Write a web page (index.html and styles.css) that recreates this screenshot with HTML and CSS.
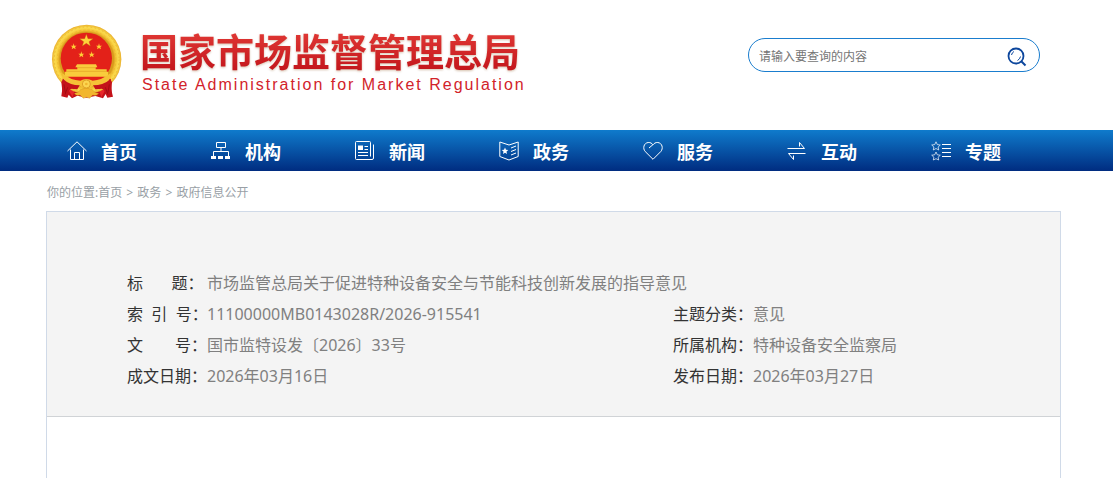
FILE: index.html
```
<!DOCTYPE html>
<html lang="zh-CN">
<head>
    <meta charset="UTF-8">
    <meta name="viewport" content="width=device-width, initial-scale=1.0">
    <title>国家市场监督管理总局</title>
    <link rel="stylesheet" href="styles.css">
</head>
<body>
    <header class="header">
        <a class="logo" href="#">
            <svg class="emblem" viewBox="33 26 216 228" aria-hidden="true">
                <defs>
                    <radialGradient id="gold" cx="50%" cy="50%" r="50%">
                        <stop offset="78%" stop-color="#d99a1c"/>
                        <stop offset="84%" stop-color="#f6c838"/>
                        <stop offset="92%" stop-color="#fbdc4f"/>
                        <stop offset="100%" stop-color="#e9ae2a"/>
                    </radialGradient>
                </defs>
                <path fill="#c4121a" d="M68 188 L212 188 L214 218 Q216 236 219 244 L202 247 L197 236 L189 249 L166 242 L140 247 L112 241 L96 249 L86 238 L82 247 L64 243 Q68 222 66 205 Z"/>
                <path fill="#e8262a" d="M68 190 L90 214 L70 224 Z M213 190 L188 214 L212 224 Z M84 222 L106 216 L98 246 Z M197 222 L174 216 L184 246 Z"/>
                <circle cx="140" cy="132" r="104" fill="url(#gold)"/>
                <circle cx="140" cy="132" r="97" fill="none" stroke="#d9981d" stroke-width="3" stroke-dasharray="5 7" opacity=".4"/>
                <circle cx="140" cy="132" r="88" fill="none" stroke="#e2a826" stroke-width="3" stroke-dasharray="8 5" opacity=".4"/>
                <circle cx="139" cy="129" r="77" fill="#e32119"/>
                <path fill="#ffd43b" stroke="#b8690f" stroke-width="1" d="M139 57 L144 70 L159 70 L147 79 L151 92 L139 84 L127 92 L131 79 L119 70 L134 70 Z"/>
                <g fill="#ffcf36">
                    <path id="star" d="M101 84 L103 91 L110 91 L105 95 L107 102 L101 98 L95 102 L97 95 L92 91 L99 91 Z"/>
                    <use href="#star" x="76"/>
                    <use href="#star" x="23" y="24"/>
                    <use href="#star" x="54" y="24"/>
                </g>
                <path fill="#f9cc3c" d="M111 147 H168 L172 156 H167 V162 H200 V169 H204 V184 H75 V169 H79 V162 H112 V156 H106 Z"/>
                <path stroke="#e2a022" stroke-width="2" d="M112 157 H167 M79 168 H200"/>
                <path fill="#e32119" d="M75 185 H204 L191 197 Q139 216 88 197 Z"/>
                <path fill="#f5c237" d="M68 174 Q92 196 121 196 Q129 191 139 191 Q149 191 158 196 Q184 196 211 174 L213 192 Q190 209 160 211 Q151 218 139 218 Q127 218 119 211 Q88 208 67 192 Z"/>
                <path fill="#c4121a" d="M64 200 L70 190 Q76 211 97 219 Q82 226 78 243 L68 237 Z M216 200 L209 190 Q202 211 183 219 Q198 226 201 243 L213 237 Z"/>
                <path fill="#c4121a" d="M68 190 Q90 210 119 210 L112 222 Q84 222 68 206 Z M213 190 Q190 210 159 210 L166 222 Q196 222 213 206 Z"/>
                <path fill="#f2b62d" stroke="#c67e14" stroke-width="1" d="M103 234 Q119 231 121 223 L139 218 L157 223 Q161 232 176 234 Q171 243 158 239 L149 249 Q139 243 130 249 L120 239 Q108 243 103 234 Z"/>
                <circle cx="139" cy="206" r="12" fill="#fbd550" stroke="#d18b18" stroke-width="2"/>
                <circle cx="139" cy="206" r="4" fill="#f0b52d"/>
                <path fill="none" stroke="#93080f" stroke-width="2" d="M72 207 L76 232 M83 216 L75 238 M208 207 L204 232 M196 216 L204 238"/>
            </svg>
            <span class="logo-text">
                <span class="logo-cn">国家市场监督管理总局</span>
                <span class="logo-en">State Administration for Market Regulation</span>
            </span>
        </a>
        <form class="search">
            <input type="text" placeholder="请输入要查询的内容" aria-label="请输入要查询的内容">
            <button type="button" aria-label="搜索">
                <svg viewBox="0 0 20 20" width="20" height="20">
                    <g fill="none" stroke="#0d479d">
                        <circle cx="9" cy="9" r="7.5" stroke-width="1.8"/>
                        <path d="M14.5 14.5 L18.5 18.5" stroke-width="2"/>
                        <path d="M4.5 8 Q5 5.5 7 4.5 M13.5 9.5 Q13 12 10.5 13.5" stroke-width="1"/>
                    </g>
                </svg>
            </button>
        </form>
    </header>

    <nav class="nav">
        <a href="#">
            <svg viewBox="0 0 20 20"><path d="M.5 10 L10 .8 L19.5 10 M3.5 8.5 V18.5 H16.5 V8.5 M7.5 18 V11.5 H12.5 V18"/></svg>
            首页
        </a>
        <a href="#">
            <svg viewBox="0 0 20 20"><path d="M5.5 1.5 H14.5 V6.5 H5.5 Z M10 6.5 V10.5 M2.5 15 V10.5 H17.5 V15"/><path class="solid" d="M0 15 H5 V18 H0 Z M7 15 H12 V18 H7 Z M14 15 H19 V18 H14 Z"/></svg>
            机构
        </a>
        <a href="#">
            <svg viewBox="0 0 20 20"><path d="M15.5 18.5 H1.5 Q.5 18.5 .5 17.5 V1.5 Q.5 .5 1.5 .5 H14.5 Q15.5 .5 15.5 1.5 V15.5 M18.5 3.5 V17 Q18.5 18.5 17 18.5 H15 M9.5 5.5 H13 M9.5 8.5 H13 M3 11.5 H13 M3 14.5 H13"/><path class="solid" d="M3 4.5 H8 V9 H3 Z"/></svg>
            新闻
        </a>
        <a href="#">
            <svg viewBox="0 0 20 20"><path d="M.8 1 L10 4 L19.2 1 V15.5 L10 19 L.8 15.5 Z M12 7 L17 5 M12 10.5 L17 8.5 M12 14 L17 12"/><path class="solid" d="M6 6.5 L7 8.8 L9.3 9 L7.5 10.5 L8 13 L6 11.7 L4 13 L4.5 10.5 L2.7 9 L5 8.8 Z"/></svg>
            政务
        </a>
        <a href="#">
            <svg viewBox="0 0 20 20"><path d="M10 18.3 L2.2 10.5 C-.5 7.5 .7 2 5.2 1.5 C7.5 1.3 9 2.5 10 3.8 C11 2.5 12.5 1.3 14.8 1.5 C19.3 2 20.5 7.5 17.8 10.5 Z M6 7 L10 3.6"/></svg>
            服务
        </a>
        <a href="#">
            <svg viewBox="0 0 20 20"><path d="M.5 7.5 H17.5 L12.5 1.5 V5.5 M18.5 12.5 H1.5 L6.5 18.5 V14.5"/></svg>
            互动
        </a>
        <a href="#">
            <svg viewBox="0 0 20 20"><path class="thin" d="M5 .8 L6.3 3.6 L9.3 4 L7.1 6 L7.7 9 L5 7.5 L2.3 9 L2.9 6 L.7 4 L3.7 3.6 Z M5 11 L6.3 13.8 L9.3 14.2 L7.1 16.2 L7.7 19 L5 17.7 L2.3 19 L2.9 16.2 L.7 14.2 L3.7 13.8 Z"/><path d="M11 3.5 H20 M11 7.5 H20 M11 11.5 H20 M11 15.5 H20"/></svg>
            专题
        </a>
    </nav>

    <main class="main">
        <div class="breadcrumb">
            你的位置:<a href="#">首页</a> <span>&gt;</span> <a href="#">政务</a> <span>&gt;</span> <a href="#">政府信息公开</a>
        </div>
        <div class="article">
            <div class="info">
                <table>
                    <colgroup>
                        <col class="col-label">
                        <col>
                        <col class="col-label">
                        <col class="col-side">
                    </colgroup>
                    <tr>
                        <th scope="row">标&emsp;&nbsp;&nbsp;&nbsp;题：</th>
                        <td colspan="3">市场监管总局关于促进特种设备安全与节能科技创新发展的指导意见</td>
                    </tr>
                    <tr>
                        <th scope="row">索&nbsp;&nbsp;引&nbsp;&nbsp;号：</th>
                        <td>11100000MB0143028R/2026-915541</td>
                        <th scope="row">主题分类：</th>
                        <td>意见</td>
                    </tr>
                    <tr>
                        <th scope="row">文&emsp;&emsp;号：</th>
                        <td>国市监特设发〔2026〕33号</td>
                        <th scope="row">所属机构：</th>
                        <td>特种设备安全监察局</td>
                    </tr>
                    <tr>
                        <th scope="row">成文日期：</th>
                        <td>2026年03月16日</td>
                        <th scope="row">发布日期：</th>
                        <td>2026年03月27日</td>
                    </tr>
                </table>
            </div>
        </div>
    </main>
</body>
</html>
```

FILE: styles.css
```
* {
    box-sizing: border-box;
}
body {
    margin: 0;
    min-height: 100vh;
    display: flex;
    flex-direction: column;
    background-color: #fff;
    color: #333;
    font-family: "Noto Sans", "Noto Sans CJK SC", sans-serif;
}
a {
    color: inherit;
    text-decoration: none;
}

/* header */
.header {
    display: flex;
    justify-content: space-between;
    align-items: flex-start;
    height: 130px;
    padding: 24px 73px 0 51px;
}
.logo {
    display: flex;
    gap: 17px;
}
.emblem {
    width: 72px;
    height: 76px;
}
.logo-text {
    display: flex;
    flex-direction: column;
    padding-top: 5px;
    color: #d2232a;
}
.logo-cn {
    font-family: "Noto Sans CJK SC", sans-serif;
    font-size: 38px;
    font-weight: bold;
    line-height: 42px;
    background: linear-gradient(#e23a36, #c3161c);
    -webkit-background-clip: text;
    background-clip: text;
    color: transparent;
    filter: drop-shadow(0 1px 1px rgba(150, 100, 50, 0.4));
}
.logo-en {
    padding-left: 2px;
    font-family: "Liberation Sans", Arial, sans-serif;
    font-size: 16px;
    line-height: 28px;
    letter-spacing: 2px;
}
.search {
    display: flex;
    align-items: center;
    width: 292px;
    height: 34px;
    margin-top: 14px;
    padding: 2px 12px 0 10px;
    border: 1px solid #1a7dce;
    border-radius: 17px;
}
.search input {
    flex: 1;
    min-width: 0;
    padding: 0;
    border: 0;
    outline: 0;
    background: none;
    font-family: inherit;
    font-size: 12px;
}
.search input::placeholder {
    color: #757575;
}
.search button {
    display: flex;
    padding: 2px 0 0;
    border: 0;
    background: none;
    cursor: pointer;
}

/* nav */
.nav {
    display: grid;
    grid-template-columns: repeat(7, 1fr);
    padding: 0 59px 0 46px;
    background: linear-gradient(#0f7bcc, #002c80);
}
.nav a {
    display: flex;
    align-items: center;
    gap: 14px;
    height: 41px;
    padding-left: 21px;
    color: #fff;
    font-size: 18px;
    font-weight: bold;
}
.nav svg {
    width: 20px;
    height: 20px;
    fill: none;
    stroke: #fff;
    stroke-width: 1;
}
.nav .solid {
    fill: #fff;
    stroke: none;
}
.nav .thin {
    opacity: 0.7;
}

/* content */
.main {
    flex: 1;
    display: flex;
    flex-direction: column;
    padding: 0 52px 0 46px;
}
.breadcrumb {
    height: 40px;
    padding-left: 1px;
    color: #999fa6;
    font-size: 12px;
    line-height: 44px;
}
.breadcrumb span {
    margin: 0 1px;
}
.article {
    flex: 1;
    border: 1px solid #d0dae8;
    border-bottom: 0;
}
.info {
    padding: 56px 80px 24px;
    border-bottom: 1px solid #d0d3d6;
    background-color: #f4f4f4;
}
.info table {
    width: 100%;
    table-layout: fixed;
    border-collapse: collapse;
    font-size: 16px;
    line-height: 31px;
}
.info .col-label {
    width: 80px;
}
.info .col-side {
    width: 227px;
}
.info th {
    padding: 0;
    color: #333;
    font-weight: normal;
    text-align: left;
    white-space: nowrap;
}
.info td {
    padding: 0;
    color: #808080;
}
```
